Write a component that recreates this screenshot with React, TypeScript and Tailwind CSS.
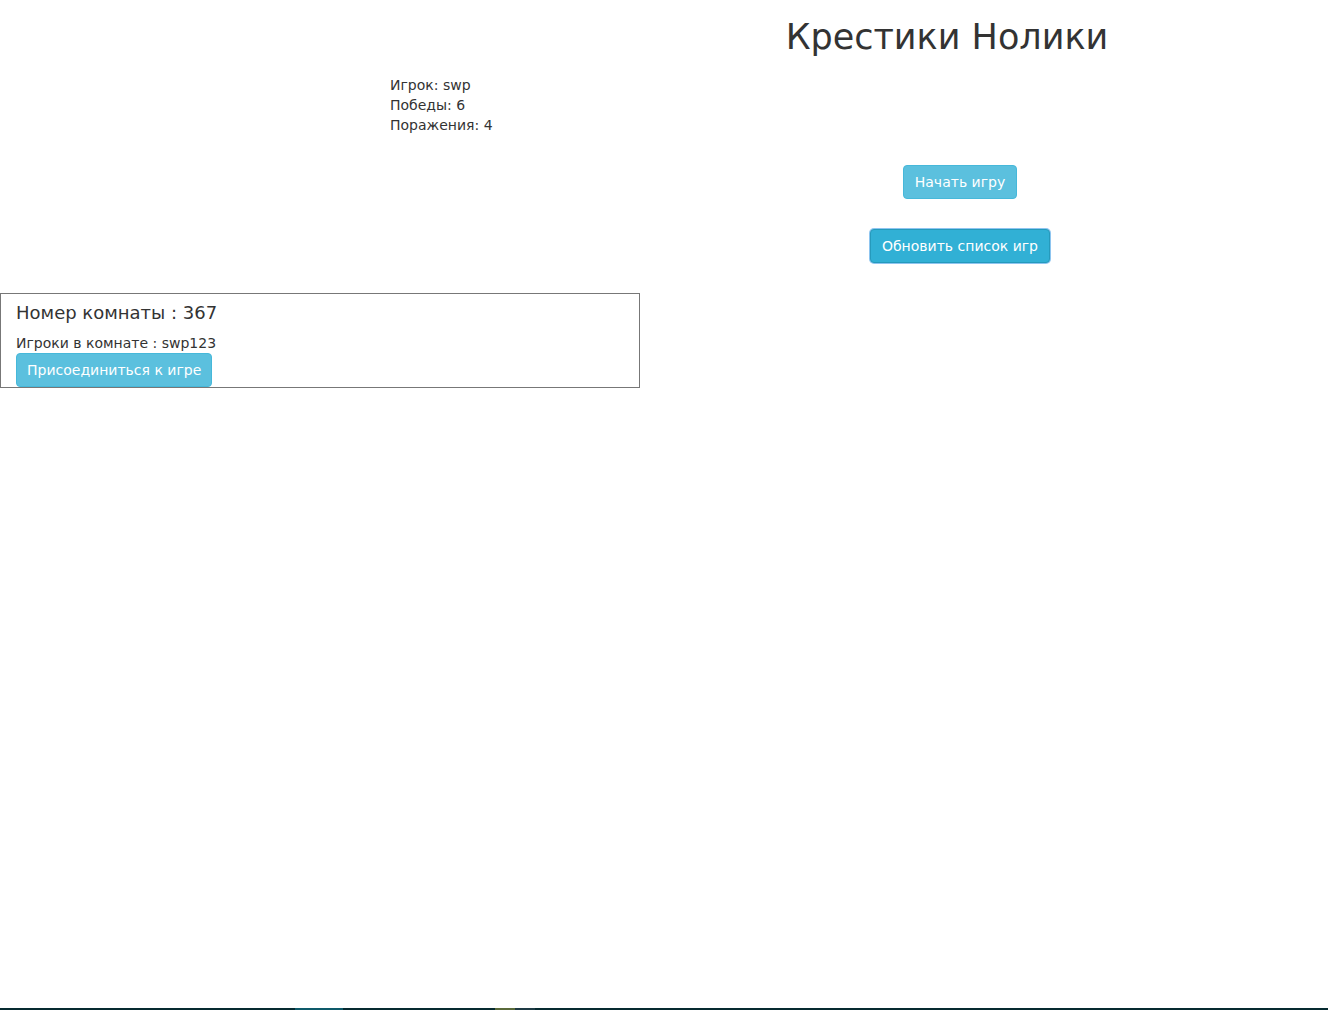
import React from "react";

const font = { fontFamily: '"DejaVu Sans", Verdana, sans-serif' };

export default function App() {
  return (
    <div className="relative w-[1328px] h-[1010px] bg-white text-[#333] overflow-hidden" style={font}>
      <div className="grid grid-cols-2">
        <div className="pl-[390px] pt-[75px] text-[14px] leading-[20px]">
          <div>Игрок: swp</div>
          <div>Победы: 6</div>
          <div>Поражения: 4</div>
        </div>
        <div className="flex flex-col items-center pr-[72px]">
          <h1 className="mt-[17px] ml-[-26px] text-[35px] leading-[40px] font-normal">Крестики Нолики</h1>
          <button className="mt-[108px] h-[34px] px-[11px] rounded-[4px] border border-[#46b8da] bg-[#5bc0de] text-white text-[14px]">
            Начать игру
          </button>
          <button className="mt-[30px] h-[34px] px-[11px] rounded-[4px] border border-[#269abc] bg-[#31b0d5] text-white text-[14px] ring-1 ring-[#8ec5f0]">
            Обновить список игр
          </button>
        </div>
      </div>
      <div className="mt-[30px] w-[640px] h-[95px] border border-[#777] px-[15px] pt-[7px]">
        <div className="text-[18px] leading-[24px]">Номер комнаты : 367</div>
        <div className="mt-[8px] text-[14px] leading-[20px]">Игроки в комнате : swp123</div>
        <button className="h-[34px] px-[10px] rounded-[4px] border border-[#46b8da] bg-[#5bc0de] text-white text-[14px]">
          Присоединиться к игре
        </button>
      </div>
      <div className="absolute left-0 right-0 bottom-0 h-[2px] bg-[#062a30] flex">
        <div className="ml-[295px] w-[48px] bg-[#0e5a6a]" />
        <div className="ml-[152px] w-[20px] bg-[#5a6a3a]" />
        <div className="w-[20px] bg-[#1e3a44]" />
      </div>
    </div>
  );
}
